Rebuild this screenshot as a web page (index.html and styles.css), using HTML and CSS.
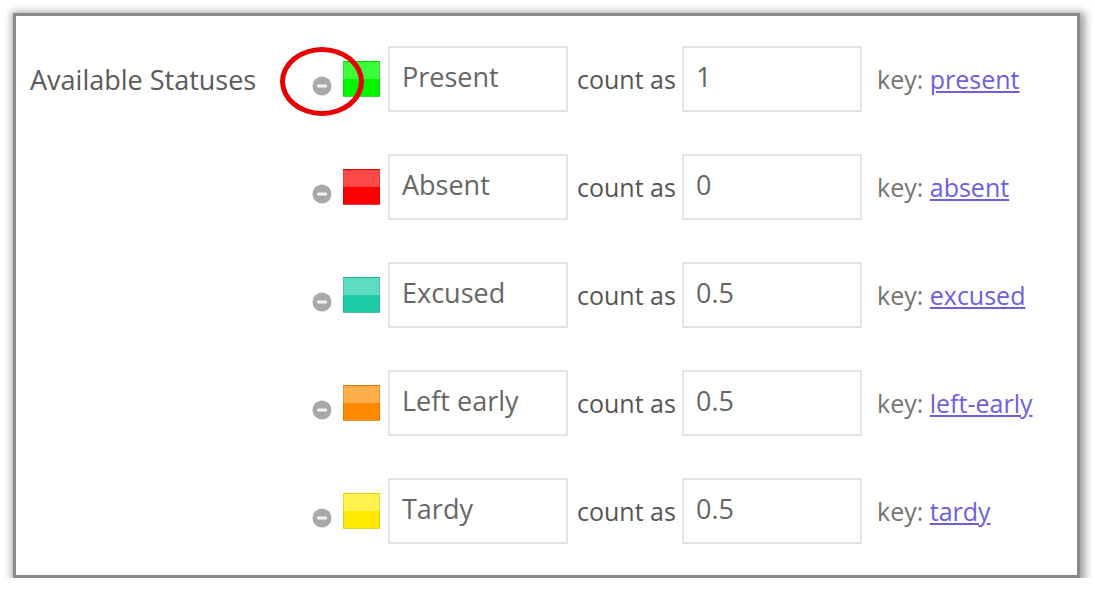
FILE: index.html
```html
<!DOCTYPE html>
<html>
<head>
<meta charset="utf-8">
<link rel="stylesheet" href="styles.css">
</head>
<body>
<div class="panel">
  <div class="field-label">Available Statuses</div>
  <div class="rows">
    <div class="row">
      <span class="remove"><svg width="20" height="20" viewBox="0 0 20 20"><circle cx="10" cy="10" r="9.5" fill="#a9a9a9"/><rect x="5" y="8.5" width="10" height="3" rx="1" fill="#f2f2f2"/></svg></span>
      <span class="swatch sw-present"></span>
      <input class="name" type="text" value="Present">
      <span class="count">count as</span>
      <input class="value" type="text" value="1">
      <span class="key">key: <a href="#">present</a></span>
    </div>
    <div class="row">
      <span class="remove"><svg width="20" height="20" viewBox="0 0 20 20"><circle cx="10" cy="10" r="9.5" fill="#a9a9a9"/><rect x="5" y="8.5" width="10" height="3" rx="1" fill="#f2f2f2"/></svg></span>
      <span class="swatch sw-absent"></span>
      <input class="name" type="text" value="Absent">
      <span class="count">count as</span>
      <input class="value" type="text" value="0">
      <span class="key">key: <a href="#">absent</a></span>
    </div>
    <div class="row">
      <span class="remove"><svg width="20" height="20" viewBox="0 0 20 20"><circle cx="10" cy="10" r="9.5" fill="#a9a9a9"/><rect x="5" y="8.5" width="10" height="3" rx="1" fill="#f2f2f2"/></svg></span>
      <span class="swatch sw-excused"></span>
      <input class="name" type="text" value="Excused">
      <span class="count">count as</span>
      <input class="value" type="text" value="0.5">
      <span class="key">key: <a href="#">excused</a></span>
    </div>
    <div class="row">
      <span class="remove"><svg width="20" height="20" viewBox="0 0 20 20"><circle cx="10" cy="10" r="9.5" fill="#a9a9a9"/><rect x="5" y="8.5" width="10" height="3" rx="1" fill="#f2f2f2"/></svg></span>
      <span class="swatch sw-left"></span>
      <input class="name" type="text" value="Left early">
      <span class="count">count as</span>
      <input class="value" type="text" value="0.5">
      <span class="key">key: <a href="#">left-early</a></span>
    </div>
    <div class="row">
      <span class="remove"><svg width="20" height="20" viewBox="0 0 20 20"><circle cx="10" cy="10" r="9.5" fill="#a9a9a9"/><rect x="5" y="8.5" width="10" height="3" rx="1" fill="#f2f2f2"/></svg></span>
      <span class="swatch sw-tardy"></span>
      <input class="name" type="text" value="Tardy">
      <span class="count">count as</span>
      <input class="value" type="text" value="0.5">
      <span class="key">key: <a href="#">tardy</a></span>
    </div>
  </div>
  <div class="highlight"></div>
</div>
</body>
</html>
```

FILE: styles.css
```css
html, body {
  margin: 0;
  padding: 0;
  background: #ffffff;
}

body {
  font-family: "Open Sans", "Noto Sans", sans-serif;
  font-size: 25px;
  color: #555555;
}

.panel {
  position: relative;
  box-sizing: border-box;
  width: 1067px;
  height: 565px;
  margin: 13px 0 0 13px;
  border: 3px solid #8a8a8a;
  box-shadow: 2px 2px 8px 3px rgba(0, 0, 0, 0.38);
  background: #ffffff;
  padding: 30px 0 0 14px;
  display: flex;
}

.field-label {
  width: 282px;
  flex: none;
  padding-top: 16px;
  line-height: 36px;
  font-size: 27px;
  color: #5a5a5a;
}

.rows {
  display: flex;
  flex-direction: column;
  gap: 42px;
}

.row {
  display: flex;
  align-items: center;
  height: 66px;
}

.remove {
  width: 20px;
  height: 20px;
  flex: none;
  margin-top: 14px;
  display: block;
}

.remove svg {
  display: block;
}

.swatch {
  width: 37px;
  height: 36px;
  flex: none;
  margin-left: 11px;
  box-sizing: border-box;
  border: 1px solid rgba(0, 0, 0, 0.12);
}

.sw-present { background: linear-gradient(#3cff3c 0 50%, #00f500 50% 100%); }
.sw-absent  { background: linear-gradient(#ff4848 0 50%, #ff0000 50% 100%); }
.sw-excused { background: linear-gradient(#5ddcc2 0 50%, #1ecba6 50% 100%); }
.sw-left    { background: linear-gradient(#ffae4a 0 50%, #ff8a00 50% 100%); }
.sw-tardy   { background: linear-gradient(#fff24f 0 50%, #ffe900 50% 100%); }

input {
  box-sizing: border-box;
  width: 180px;
  height: 66px;
  flex: none;
  border: 2px solid #e2e2e2;
  background: #ffffff;
  font-family: "Open Sans", "Noto Sans", sans-serif;
  font-size: 27px;
  color: #666666;
  padding: 0 0 5px 12px;
  margin: 0;
  outline: none;
}

.name {
  margin-left: 8px;
}

.count {
  width: 105px;
  flex: none;
  margin-left: 9px;
  color: #555555;
  white-space: nowrap;
}

.key {
  margin-left: 15px;
  color: #757575;
  white-space: nowrap;
}

.key a {
  color: #6c60dd;
  text-decoration: underline;
}

.highlight {
  position: absolute;
  left: 264px;
  top: 31px;
  width: 84px;
  height: 69px;
  box-sizing: border-box;
  border: 5px solid #e80000;
  border-radius: 50%;
}
```
